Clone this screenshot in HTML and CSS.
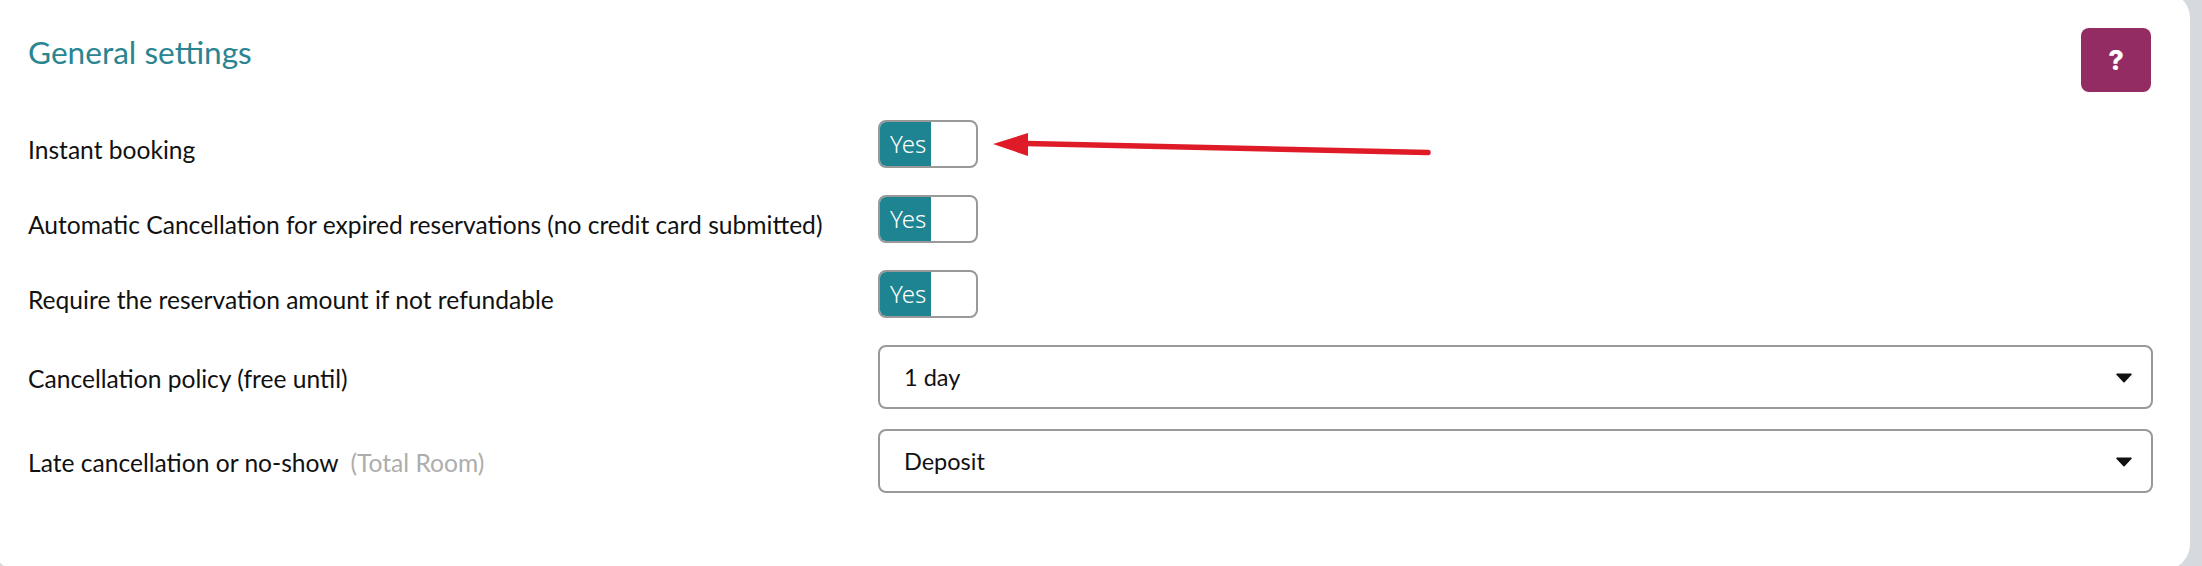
FILE: index.html
```html
<!DOCTYPE html>
<html lang="en">
<head>
    <meta charset="UTF-8">
    <meta name="viewport" content="width=device-width, initial-scale=1.0">
    <title>General settings</title>
    <link rel="stylesheet" href="styles.css">
</head>
<body>
    <div class="card">
        <div class="card-head">
            <h2>General settings</h2>
            <button class="help-btn">?</button>
        </div>

        <div class="row row-toggle">
            <label>Instant booking</label>
            <div class="toggle"><span class="toggle-on">Yes</span><span class="toggle-off"></span></div>
        </div>
        <div class="row row-toggle">
            <label>Automatic Cancellation for expired reservations (no credit card submitted)</label>
            <div class="toggle"><span class="toggle-on">Yes</span><span class="toggle-off"></span></div>
        </div>
        <div class="row row-toggle">
            <label>Require the reservation amount if not refundable</label>
            <div class="toggle"><span class="toggle-on">Yes</span><span class="toggle-off"></span></div>
        </div>

        <div class="row row-select">
            <label>Cancellation policy (free until)</label>
            <div class="select-box">
                <select><option>1 day</option></select>
                <svg class="caret" width="16" height="10" viewBox="0 0 16 10"><path d="M1 0.5h14a.8.8 0 0 1 .6 1.3L8.6 9.2a.8.8 0 0 1-1.2 0L.4 1.8A.8.8 0 0 1 1 .5z" fill="#111"/></svg>
            </div>
        </div>
        <div class="row row-select">
            <label>Late cancellation or no-show <span class="muted">(Total Room)</span></label>
            <div class="select-box">
                <select><option>Deposit</option></select>
                <svg class="caret" width="16" height="10" viewBox="0 0 16 10"><path d="M1 0.5h14a.8.8 0 0 1 .6 1.3L8.6 9.2a.8.8 0 0 1-1.2 0L.4 1.8A.8.8 0 0 1 1 .5z" fill="#111"/></svg>
            </div>
        </div>

        <!-- red annotation arrow -->
        <svg class="arrow" width="450" height="40" viewBox="0 0 450 40">
            <path d="M34 10.5L435 19.5" stroke="#e01b28" stroke-width="5.5" stroke-linecap="round" fill="none"/>
            <path d="M0 11L35 0V23z" fill="#e01b28"/>
        </svg>
    </div>
</body>
</html>
```

FILE: styles.css
```css
html, body {
    margin: 0;
    padding: 0;
    height: 566px;
    overflow: hidden;
    background-color: #d6d9de;
}
body {
    font-family: "Lato", sans-serif;
    color: #111;
}
.card {
    position: relative;
    box-sizing: border-box;
    height: 578px;
    margin: -8px 12px 0 -8px;
    padding: 36px 37px 0 36px;
    background: #ffffff;
    border-radius: 26px;
}
.card-head {
    display: flex;
    justify-content: space-between;
    align-items: flex-start;
    padding-right: 2px;
    margin-bottom: 28px;
}
.card-head h2 {
    margin: 0;
    padding-top: 1px;
    font-size: 31.6px;
    font-weight: 400;
    line-height: 46px;
    color: #2a8591;
}
.help-btn {
    width: 70px;
    height: 64px;
    padding: 0;
    border: none;
    border-radius: 8px;
    background: #922c63;
    color: #ffffff;
    font-family: "Inter", sans-serif;
    font-size: 27px;
    font-weight: 800;
}
.row {
    display: grid;
    grid-template-columns: 850px 1fr;
    align-items: center;
    font-size: 24.6px;
}
.row label {
    padding-top: 10px;
}
.row-toggle {
    margin-bottom: 27px;
}
.row-select {
    margin-bottom: 20px;
}
.row-select label {
    padding-top: 3px;
}
.muted {
    margin-left: 6px;
    color: #adadad;
}
.toggle {
    box-sizing: border-box;
    display: flex;
    width: 100px;
    height: 48px;
    border: 2px solid #999;
    border-radius: 8px;
    overflow: hidden;
}
.toggle-on {
    width: 51px;
    padding-left: 10px;
    box-sizing: border-box;
    background: #1f8491;
    color: #ffffff;
    font-family: "Noto Sans", sans-serif;
    font-size: 24px;
    font-weight: 300;
    line-height: 44px;
}
.toggle-off {
    flex: 1;
}
.select-box {
    position: relative;
}
.select-box select {
    display: block;
    box-sizing: border-box;
    width: 100%;
    height: 64px;
    padding: 0 24px;
    border: 2px solid #999;
    border-radius: 8px;
    background: #ffffff;
    color: #111;
    font-family: "Lato", sans-serif;
    font-size: 23.5px;
    appearance: none;
}
.caret {
    position: absolute;
    top: 28px;
    right: 21px;
}
.arrow {
    position: absolute;
    left: 1001px;
    top: 141px;
}
```
